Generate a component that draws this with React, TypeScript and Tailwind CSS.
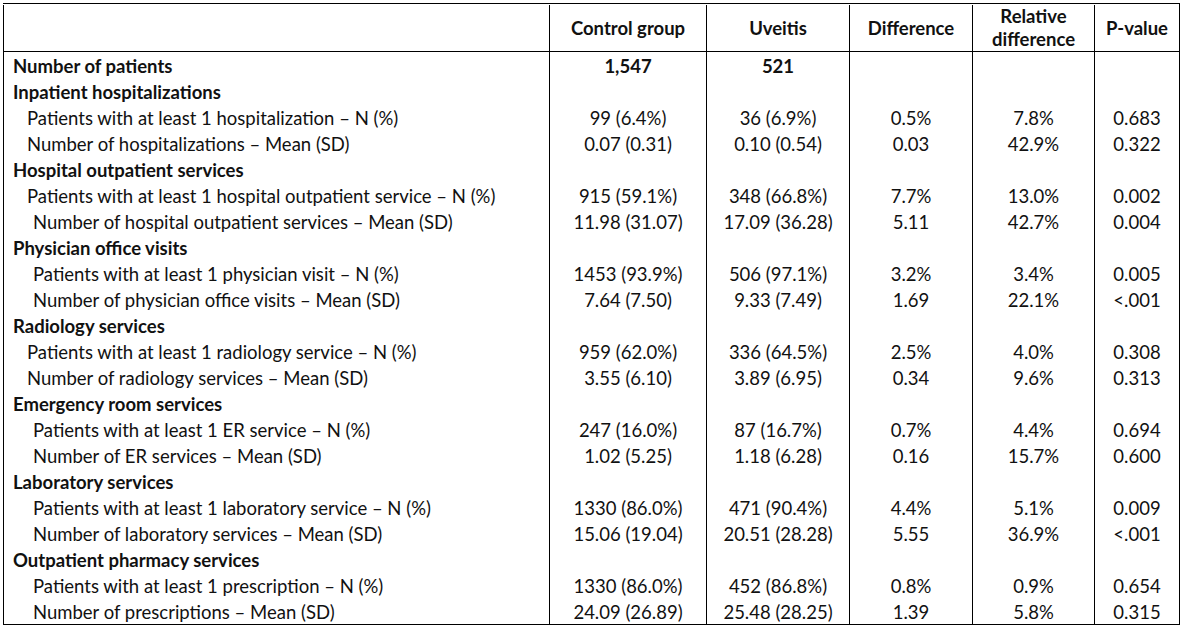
type Row = {
  label: string;
  bold?: boolean;
  indent?: 'a' | 'b';
  vals?: string[];
};

const rows: Row[] = [
  { label: 'Number of patients', bold: true, vals: ['1,547', '521', '', '', ''] },
  { label: 'Inpatient hospitalizations', bold: true },
  { label: 'Patients with at least 1 hospitalization – N (%)', indent: 'a', vals: ['99 (6.4%)', '36 (6.9%)', '0.5%', '7.8%', '0.683'] },
  { label: 'Number of hospitalizations – Mean (SD)', indent: 'a', vals: ['0.07 (0.31)', '0.10 (0.54)', '0.03', '42.9%', '0.322'] },
  { label: 'Hospital outpatient services', bold: true },
  { label: 'Patients with at least 1 hospital outpatient service – N (%)', indent: 'a', vals: ['915 (59.1%)', '348 (66.8%)', '7.7%', '13.0%', '0.002'] },
  { label: 'Number of hospital outpatient services – Mean (SD)', indent: 'b', vals: ['11.98 (31.07)', '17.09 (36.28)', '5.11', '42.7%', '0.004'] },
  { label: 'Physician office visits', bold: true },
  { label: 'Patients with at least 1 physician visit – N (%)', indent: 'b', vals: ['1453 (93.9%)', '506 (97.1%)', '3.2%', '3.4%', '0.005'] },
  { label: 'Number of physician office visits – Mean (SD)', indent: 'b', vals: ['7.64 (7.50)', '9.33 (7.49)', '1.69', '22.1%', '<.001'] },
  { label: 'Radiology services', bold: true },
  { label: 'Patients with at least 1 radiology service – N (%)', indent: 'a', vals: ['959 (62.0%)', '336 (64.5%)', '2.5%', '4.0%', '0.308'] },
  { label: 'Number of radiology services – Mean (SD)', indent: 'a', vals: ['3.55 (6.10)', '3.89 (6.95)', '0.34', '9.6%', '0.313'] },
  { label: 'Emergency room services', bold: true },
  { label: 'Patients with at least 1 ER service – N (%)', indent: 'b', vals: ['247 (16.0%)', '87 (16.7%)', '0.7%', '4.4%', '0.694'] },
  { label: 'Number of ER services – Mean (SD)', indent: 'b', vals: ['1.02 (5.25)', '1.18 (6.28)', '0.16', '15.7%', '0.600'] },
  { label: 'Laboratory services', bold: true },
  { label: 'Patients with at least 1 laboratory service – N (%)', indent: 'b', vals: ['1330 (86.0%)', '471 (90.4%)', '4.4%', '5.1%', '0.009'] },
  { label: 'Number of laboratory services – Mean (SD)', indent: 'b', vals: ['15.06 (19.04)', '20.51 (28.28)', '5.55', '36.9%', '<.001'] },
  { label: 'Outpatient pharmacy services', bold: true },
  { label: 'Patients with at least 1 prescription – N (%)', indent: 'b', vals: ['1330 (86.0%)', '452 (86.8%)', '0.8%', '0.9%', '0.654'] },
  { label: 'Number of prescriptions – Mean (SD)', indent: 'b', vals: ['24.09 (26.89)', '25.48 (28.25)', '1.39', '5.8%', '0.315'] },
];

const cols = 'grid grid-cols-[546px_157px_143px_123px_122px_85px]';
const cell = 'border-l border-black flex items-center justify-center';

export default function App() {
  return (
    <div className="bg-white w-[1182px] h-[625px] pt-[3px] pl-[3px] font-['Lato',sans-serif] text-[18.5px] text-[#111]">
      <div className="w-[1177px] border border-black border-l-0">
        <div className={`${cols} h-[48px] border-b border-black font-bold leading-[23px] pt-[1px]`}>
          <div className="border-l border-black" />
          <div className={cell}>Control group</div>
          <div className={cell}>Uveitis</div>
          <div className={cell}>Difference</div>
          <div className={`${cell} text-center`}>
            Relative
            <br />
            difference
          </div>
          <div className={cell}>P-value</div>
        </div>
        {rows.map((r, i) => (
          <div key={i} className={`${cols} h-[26px] leading-[26px]`}>
            <div
              className={`border-l border-black pt-[3px] leading-[23px] whitespace-nowrap ${r.bold ? 'font-bold pl-[9px]' : r.indent === 'a' ? 'pl-[23px]' : 'pl-[29px]'}`}
            >
              {r.label}
            </div>
            {[0, 1, 2, 3, 4].map((j) => (
              <div
                key={j}
                className={`border-l border-black text-center pt-[3px] leading-[23px] whitespace-nowrap ${i === 0 ? 'font-bold' : ''}`}
              >
                {r.vals ? r.vals[j] : ''}
              </div>
            ))}
          </div>
        ))}
      </div>
    </div>
  );
}
